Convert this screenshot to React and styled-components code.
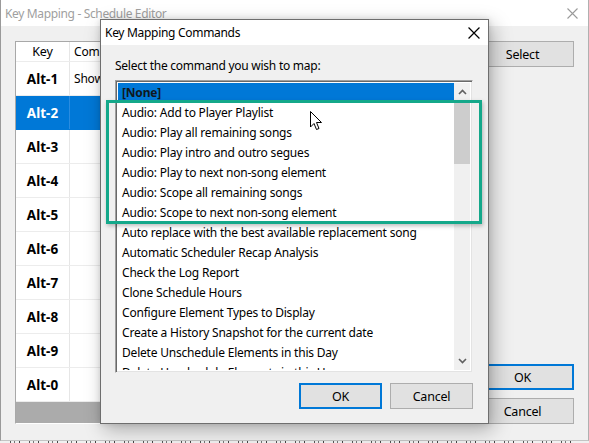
import React from "react";
import styled, { createGlobalStyle } from "styled-components";

const Global = createGlobalStyle`
  html, body { margin: 0; padding: 0; background: #f0f0f0; }
  body { width: 589px; height: 443px; overflow: hidden; font-family: "Noto Sans", "Open Sans", sans-serif; font-size: 12px; color: #000; }
  * { box-sizing: border-box; }
`;

const Screen = styled.div`
  position: relative;
  width: 589px;
  height: 443px;
  overflow: hidden;
  background: #f0f0f0;
`;

const Window = styled.div`
  width: 589px;
  height: 441px;
  display: flex;
  flex-direction: column;
  border-left: 1px solid #9a9a9a;
  border-right: 1px solid #b0b0b0;
  border-bottom: 1px solid #c4c4c4;
  background: #f0f0f0;
`;

const TitleBar = styled.div`
  height: 26px;
  flex: none;
  background: #fff;
  display: flex;
  align-items: center;
  justify-content: space-between;
  padding: 0 10px 0 4px;
  color: #a0a0a0;
  font-size: 12px;
  letter-spacing: -0.35px;
`;

const WinBody = styled.div`
  flex: 1;
  display: flex;
  padding: 15px 13px 16px 14px;
  gap: 14px;
`;

const Table = styled.div`
  width: 442px;
  display: flex;
  flex-direction: column;
  border: 1px solid #a8a8a8;
  border-bottom: 1px solid #fff;
  background: #ababab;
`;

const Row = styled.div`
  display: grid;
  grid-template-columns: 54px 1fr;
  height: ${(p) => (p.$header ? "20px" : "34px")};
  background: ${(p) => (p.$sel ? "#0078d7" : "#fff")};
  color: ${(p) => (p.$sel ? "#fff" : "#000")};
  border-bottom: 1px solid ${(p) => (p.$sel ? "#0078d7" : "#ececec")};
  flex: none;
`;

const KeyCell = styled.div`
  display: flex;
  align-items: center;
  justify-content: center;
  border-right: 1px solid ${(p) => (p.$sel ? "#2a8ce0" : "#e6e6e6")};
  font-weight: ${(p) => (p.$header ? 400 : 700)};
  font-size: ${(p) => (p.$header ? "12.5px" : "13.5px")};
  letter-spacing: ${(p) => (p.$header ? "-0.2px" : "0")};
`;

const CmdCell = styled.div`
  display: flex;
  align-items: center;
  padding-left: 4px;
  font-size: 12px;
  letter-spacing: -0.2px;
`;

const SideCol = styled.div`
  width: 103px;
  display: flex;
  flex-direction: column;
  gap: 8px;
`;

const WinButton = styled.div`
  height: 26px;
  display: flex;
  align-items: center;
  justify-content: center;
  background: #e1e1e1;
  border: ${(p) => (p.$def ? "2px solid #0078d7" : "1px solid #adadad")};
  font-size: 12.5px;
  letter-spacing: -0.2px;
  margin-top: ${(p) => (p.$push ? "auto" : "0")};
`;

const BottomStrip = styled.div`
  height: 2px;
  margin: 0 10px;
  background: repeating-linear-gradient(
    90deg,
    #555 0 1px,
    transparent 1px 4px,
    #777 4px 5px,
    transparent 5px 9px,
    #444 9px 10px,
    transparent 10px 19px
  );
`;

const Dialog = styled.div`
  position: absolute;
  left: 100px;
  top: 19px;
  width: 389px;
  height: 405px;
  background: #f0f0f0;
  border: 1px solid #6e6e6e;
  box-shadow: 4px 6px 18px rgba(0, 0, 0, 0.28), 0 0 6px rgba(0, 0, 0, 0.12);
  display: flex;
  flex-direction: column;
`;

const DlgTitle = styled.div`
  height: 25px;
  flex: none;
  background: #fff;
  display: flex;
  align-items: center;
  justify-content: space-between;
  padding: 0 8px 0 4px;
  font-size: 12px;
  letter-spacing: -0.3px;
`;

const DlgBody = styled.div`
  flex: 1;
  display: flex;
  flex-direction: column;
  padding: 13px 15px 14px 14px;
`;

const Label = styled.div`
  height: 16px;
  line-height: 16px;
  margin-bottom: 6px;
  font-size: 12px;
  letter-spacing: -0.25px;
`;

const ListBox = styled.div`
  height: 293px;
  display: flex;
  background: #fff;
  border: 1px solid;
  border-color: #a0a0a0 #f0f0f0 #f0f0f0 #a0a0a0;
  box-shadow: inset 1px 1px 0 #696969, inset -1px -1px 0 #e3e3e3;
  padding: 2px;
  overflow: hidden;
`;

const Items = styled.div`
  flex: 1;
  display: flex;
  flex-direction: column;
  overflow: hidden;
`;

const Item = styled.div`
  height: 20px;
  flex: none;
  line-height: 20px;
  padding-left: 4px;
  white-space: nowrap;
  font-size: 12px;
  letter-spacing: -0.2px;
  background: ${(p) => (p.$sel ? "#0078d7" : "transparent")};
  color: ${(p) => (p.$sel ? "#101820" : "#000")};
  font-weight: ${(p) => (p.$sel ? 700 : 400)};
`;

const ScrollBar = styled.div`
  width: 16px;
  flex: none;
  background: #f0f0f0;
  display: flex;
  flex-direction: column;
`;

const Arrow = styled.div`
  height: 18px;
  display: flex;
  align-items: center;
  justify-content: center;
  flex: none;
`;

const Thumb = styled.div`
  height: 63px;
  background: #cdcdcd;
  flex: none;
`;

const Track = styled.div`
  flex: 1;
`;

const ButtonRow = styled.div`
  margin-top: auto;
  display: flex;
  justify-content: flex-end;
  gap: 8px;
`;

const DlgButton = styled.div`
  width: 83px;
  height: 26px;
  display: flex;
  align-items: center;
  justify-content: center;
  background: #e1e1e1;
  border: ${(p) => (p.$def ? "2px solid #0078d7" : "1px solid #adadad")};
  font-size: 12.5px;
  letter-spacing: -0.2px;
`;

const Highlight = styled.div`
  position: absolute;
  left: 106px;
  top: 100px;
  width: 376px;
  height: 124px;
  border: 3px solid #14a88a;
  box-shadow: 1px 2px 4px rgba(0, 0, 0, 0.25);
  pointer-events: none;
`;

const Cursor = styled.svg`
  position: absolute;
  left: 310px;
  top: 111px;
`;

const CloseX = ({ color, size = 11 }) => (
  <svg width={size} height={size} viewBox="0 0 11 11">
    <path d="M0.5 0.5 L10.5 10.5 M10.5 0.5 L0.5 10.5" stroke={color} strokeWidth="1.1" fill="none" />
  </svg>
);

const Chevron = ({ up }) => (
  <svg width="9" height="6" viewBox="0 0 9 6">
    <path d={up ? "M1 5 L4.5 1.5 L8 5" : "M1 1 L4.5 4.5 L8 1"} stroke="#606060" strokeWidth="1.6" fill="none" />
  </svg>
);

const keys = ["Alt-1", "Alt-2", "Alt-3", "Alt-4", "Alt-5", "Alt-6", "Alt-7", "Alt-8", "Alt-9", "Alt-0"];

const commands = [
  "[None]",
  "Audio: Add to Player Playlist",
  "Audio: Play all remaining songs",
  "Audio: Play intro and outro segues",
  "Audio: Play to next non-song element",
  "Audio: Scope all remaining songs",
  "Audio: Scope to next non-song element",
  "Auto replace with the best available replacement song",
  "Automatic Scheduler Recap Analysis",
  "Check the Log Report",
  "Clone Schedule Hours",
  "Configure Element Types to Display",
  "Create a History Snapshot for the current date",
  "Delete Unschedule Elements in this Day",
  "Delete Unschedule Elements in this Hour",
];

export default function App() {
  return (
    <Screen>
      <Global />
      <Window>
        <TitleBar>
          <span>Key Mapping - Schedule Editor</span>
          <CloseX color="#9a9a9a" />
        </TitleBar>
        <WinBody>
          <Table>
            <Row $header>
              <KeyCell $header>Key</KeyCell>
              <CmdCell>Command</CmdCell>
            </Row>
            {keys.map((k, i) => (
              <Row key={k} $sel={i === 1}>
                <KeyCell $sel={i === 1}>{k}</KeyCell>
                <CmdCell>{i === 0 ? "Show" : ""}</CmdCell>
              </Row>
            ))}
          </Table>
          <SideCol>
            <WinButton>Select</WinButton>
            <WinButton $def $push>OK</WinButton>
            <WinButton>Cancel</WinButton>
          </SideCol>
        </WinBody>
      </Window>
      <BottomStrip />

      <Dialog>
        <DlgTitle>
          <span>Key Mapping Commands</span>
          <CloseX color="#000" size={12} />
        </DlgTitle>
        <DlgBody>
          <Label>Select the command you wish to map:</Label>
          <ListBox>
            <Items>
              {commands.map((c, i) => (
                <Item key={c} $sel={i === 0}>{c}</Item>
              ))}
            </Items>
            <ScrollBar>
              <Arrow><Chevron up /></Arrow>
              <Thumb />
              <Track />
              <Arrow><Chevron /></Arrow>
            </ScrollBar>
          </ListBox>
          <ButtonRow>
            <DlgButton $def>OK</DlgButton>
            <DlgButton>Cancel</DlgButton>
          </ButtonRow>
        </DlgBody>
      </Dialog>

      <Highlight />
      <Cursor width="13" height="20" viewBox="0 0 13 20">
        <path d="M0.5 0.5 L0.5 16 L4 12.5 L6.5 18.5 L9 17.5 L6.5 11.5 L11.5 11.5 Z" fill="#fff" stroke="#000" strokeWidth="1" strokeLinejoin="round" />
      </Cursor>
    </Screen>
  );
}
